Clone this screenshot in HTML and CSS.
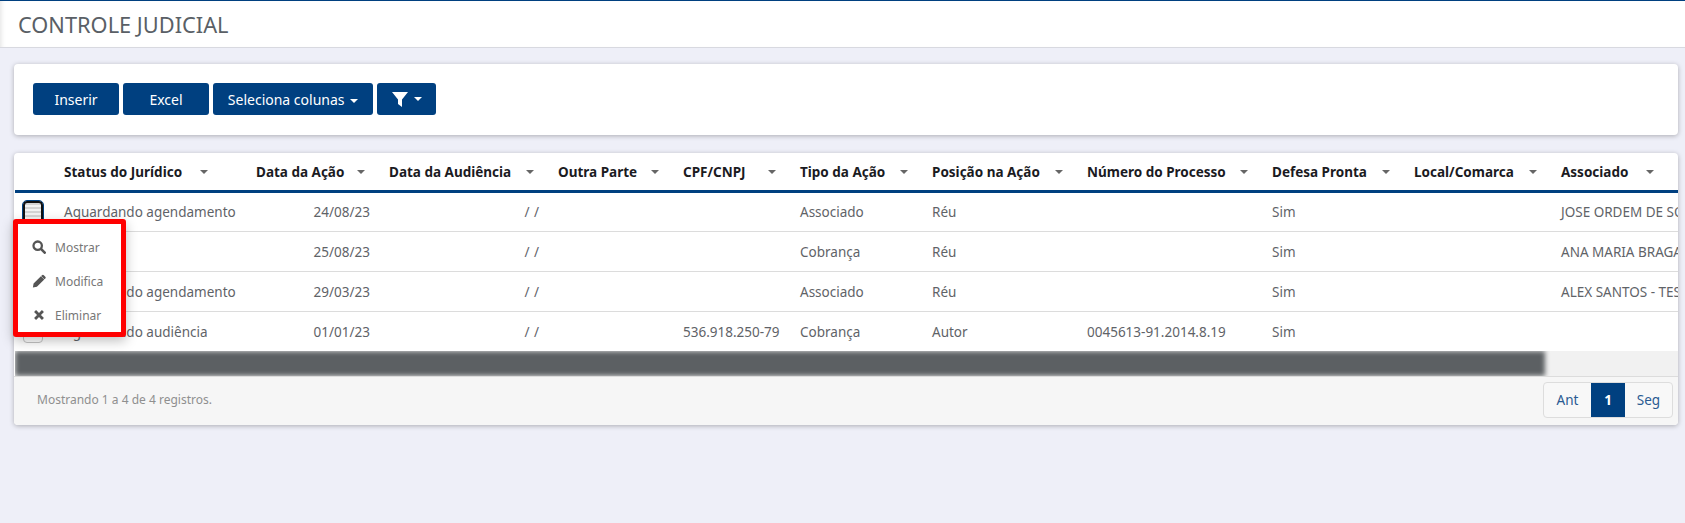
FILE: index.html
```html
<!DOCTYPE html>
<html lang="pt-BR">

<head>
    <meta charset="UTF-8">
    <meta name="viewport" content="width=device-width, initial-scale=1.0">
    <title>Controle Judicial</title>
    <link rel="stylesheet" href="styles.css">
</head>

<body>

    <header class="page-header">
        <h1>CONTROLE JUDICIAL</h1>
    </header>

    <main class="content">

        <section class="card toolbar">
            <button type="button" class="btn btn-wide">Inserir</button>
            <button type="button" class="btn btn-wide">Excel</button>
            <button type="button" class="btn btn-cols">Seleciona colunas <span class="caret"></span></button>
            <button type="button" class="btn btn-icon">
                <svg class="funnel" viewBox="0 0 16 16"><path d="M0 1h16L10 8.500V16L6 13V8.500z" /></svg>
                <span class="caret"></span>
            </button>
        </section>

        <section class="card table-card">
            <div class="table-wrap">
                <table>
                    <colgroup>
                        <col class="c-act">
                        <col class="c-status">
                        <col class="c-data">
                        <col class="c-aud">
                        <col class="c-outra">
                        <col class="c-cpf">
                        <col class="c-tipo">
                        <col class="c-pos">
                        <col class="c-num">
                        <col class="c-def">
                        <col class="c-local">
                        <col class="c-assoc">
                    </colgroup>
                    <thead>
                        <tr>
                            <th></th>
                            <th>Status do Jurídico<span class="sort sort-near"></span></th>
                            <th>Data da Ação<span class="sort"></span></th>
                            <th>Data da Audiência<span class="sort"></span></th>
                            <th>Outra Parte<span class="sort"></span></th>
                            <th>CPF/CNPJ<span class="sort"></span></th>
                            <th>Tipo da Ação<span class="sort"></span></th>
                            <th>Posição na Ação<span class="sort"></span></th>
                            <th>Número do Processo<span class="sort"></span></th>
                            <th>Defesa Pronta<span class="sort"></span></th>
                            <th>Local/Comarca<span class="sort"></span></th>
                            <th>Associado<span class="sort sort-last"></span></th>
                        </tr>
                    </thead>
                    <tbody>
                        <tr>
                            <td><button type="button" class="row-btn row-btn-open"></button></td>
                            <td>Aguardando agendamento</td>
                            <td class="right">24/08/23</td>
                            <td class="right slashes">/ /</td>
                            <td></td>
                            <td></td>
                            <td>Associado</td>
                            <td>Réu</td>
                            <td></td>
                            <td>Sim</td>
                            <td></td>
                            <td>JOSE ORDEM DE SOUZA</td>
                        </tr>
                        <tr>
                            <td><button type="button" class="row-btn"></button></td>
                            <td>Pendente</td>
                            <td class="right">25/08/23</td>
                            <td class="right slashes">/ /</td>
                            <td></td>
                            <td></td>
                            <td>Cobrança</td>
                            <td>Réu</td>
                            <td></td>
                            <td>Sim</td>
                            <td></td>
                            <td>ANA MARIA BRAGANCA</td>
                        </tr>
                        <tr>
                            <td><button type="button" class="row-btn"></button></td>
                            <td>Aguardando agendamento</td>
                            <td class="right">29/03/23</td>
                            <td class="right slashes">/ /</td>
                            <td></td>
                            <td></td>
                            <td>Associado</td>
                            <td>Réu</td>
                            <td></td>
                            <td>Sim</td>
                            <td></td>
                            <td>ALEX SANTOS - TESTE</td>
                        </tr>
                        <tr>
                            <td><button type="button" class="row-btn"></button></td>
                            <td>Aguardando audiência</td>
                            <td class="right">01/01/23</td>
                            <td class="right slashes">/ /</td>
                            <td></td>
                            <td>536.918.250-79</td>
                            <td>Cobrança</td>
                            <td>Autor</td>
                            <td>0045613-91.2014.8.19</td>
                            <td>Sim</td>
                            <td></td>
                            <td></td>
                        </tr>
                    </tbody>
                </table>
            </div>

            <div class="scroll-track">
                <div class="scroll-thumb"></div>
            </div>

            <div class="table-footer">
                <span class="info">Mostrando 1 a 4 de 4 registros.</span>
                <nav class="pager">
                    <a class="page">Ant</a>
                    <a class="page page-on">1</a>
                    <a class="page">Seg</a>
                </nav>
            </div>

            <ul class="row-menu">
                <li>
                    <svg viewBox="0 0 16 16"><circle cx="6.500" cy="6.500" r="4.800" fill="none" stroke="currentColor" stroke-width="2.600" /><path d="M10.500 10.500l4 4" fill="none" stroke="currentColor" stroke-width="3" stroke-linecap="round" /></svg>
                    Mostrar
                </li>
                <li>
                    <svg viewBox="0 0 16 16"><path d="M1 15.500l.8-4.600L10.200 2.500l3.800 3.800-8.400 8.400zM11.400 1.300a1.500 1.500 0 0 1 2.100 0l1.700 1.700a1.500 1.500 0 0 1 0 2.100l-.9.900-3.800-3.800z" /></svg>
                    Modifica
                </li>
                <li>
                    <svg viewBox="0 0 16 16"><path d="M3.500 3.500l9 9M12.500 3.500l-9 9" fill="none" stroke="currentColor" stroke-width="3.200" /></svg>
                    Eliminar
                </li>
            </ul>
        </section>

    </main>

</body>

</html>
```

FILE: styles.css
```css
* {
    box-sizing: border-box;
}

body {
    margin: 0;
    min-height: 523px;
    background: #eeeff8;
    font-family: 'Noto Sans', sans-serif;
    font-size: 13.5px;
    color: #5f6368;
}

.page-header {
    height: 48px;
    padding: 9px 18px 0;
    background: #fff;
    border-top: 1px solid #004080;
    border-bottom: 1px solid #d8d9e0;
    box-shadow: inset 5px 0 5px -4px rgba(0, 0, 0, 0.12);
}

h1 {
    margin: 0;
    font-size: 21.800px;
    font-weight: 400;
    line-height: 30px;
    color: #5a5f66;
}

.content {
    padding: 16px 7px 0 14px;
}

.card {
    background: #fff;
    border-radius: 4px;
    box-shadow: 0 1px 5px rgba(0, 0, 0, 0.28);
}

.toolbar {
    display: flex;
    gap: 4px;
    height: 71px;
    padding: 19px;
    margin-bottom: 18px;
}

.btn {
    height: 32px;
    padding: 0;
    border: none;
    border-radius: 3px;
    background: #004080;
    color: #fff;
    font-family: inherit;
    font-size: 14px;
}

.btn-wide {
    width: 86px;
}

.btn-cols {
    width: 160px;
}

.btn-icon {
    display: flex;
    align-items: center;
    justify-content: center;
    gap: 4px;
    width: 59px;
}

.funnel {
    width: 16px;
    height: 16px;
    fill: #fff;
}

.caret {
    display: inline-block;
    margin-left: 2px;
    vertical-align: middle;
    border-top: 4px solid #fff;
    border-left: 4px solid transparent;
    border-right: 4px solid transparent;
}

.table-card {
    position: relative;
    height: 272px;
}

.table-wrap {
    overflow: hidden;
    padding-left: 1px;
    border-radius: 4px 4px 0 0;
}

table {
    table-layout: fixed;
    width: 1700px;
    border-collapse: separate;
    border-spacing: 0;
}

.c-act { width: 37px; }
.c-status { width: 192px; }
.c-data { width: 133px; }
.c-aud { width: 169px; }
.c-outra { width: 125px; }
.c-cpf { width: 117px; }
.c-tipo { width: 132px; }
.c-pos { width: 155px; }
.c-num { width: 185px; }
.c-def { width: 142px; }
.c-local { width: 147px; }
.c-assoc { width: 166px; }

th {
    position: relative;
    height: 40px;
    padding: 0 12px;
    text-align: left;
    font-weight: 700;
    color: #1b1b1f;
    white-space: nowrap;
    overflow: hidden;
    border-bottom: 3px solid #004080;
}

.sort {
    position: absolute;
    top: 17px;
    right: 12px;
    border-top: 4px solid #666;
    border-left: 4px solid transparent;
    border-right: 4px solid transparent;
}

.sort-near {
    right: 36px;
}

.sort-last {
    right: 61px;
}

td {
    height: 40px;
    padding: 0 12px;
    white-space: nowrap;
    overflow: hidden;
    border-bottom: 1px solid #dcdcdc;
}

tbody tr:first-child td {
    height: 39px;
}

tbody tr:last-child td {
    height: 39px;
    border-bottom: none;
}

td:first-child {
    padding: 0 0 0 8px;
}

td.right {
    padding-right: 7px;
    text-align: right;
}

td.slashes {
    word-spacing: 1px;
}

.row-btn {
    display: block;
    width: 20px;
    height: 22px;
    padding: 0;
    border: 1px solid #c4c4c4;
    border-radius: 4px;
    background: #fff;
}

.row-btn-open {
    border: 2px solid #111;
    outline: 1px solid #004080;
    background: repeating-linear-gradient(#d4d4d4 0 2px, #f2f2f2 2px 4px);
}

.scroll-track {
    height: 25px;
    margin-left: 1px;
    overflow: hidden;
    background: #f1f1f1;
}

.scroll-thumb {
    width: 1530px;
    height: 25px;
    background: #5c6063;
    filter: blur(2.500px);
}

.table-footer {
    display: flex;
    align-items: center;
    justify-content: space-between;
    height: 49px;
    padding: 0 5px 2px 23px;
    background: #f6f6f6;
    border-top: 1px solid #dcdcdc;
    border-radius: 0 0 4px 4px;
}

.info {
    color: #8f8f8f;
    font-size: 12px;
    line-height: 14px;
}

.pager {
    display: flex;
    height: 36px;
    border: 1px solid #ddd;
    border-radius: 4px;
    overflow: hidden;
    background: #f8f8f8;
}

.page {
    display: flex;
    align-items: center;
    justify-content: center;
    width: 47px;
    color: #2a5a92;
}

.page-on {
    width: 34px;
    background: #004080;
    color: #fff;
    font-weight: 700;
}

.row-menu {
    position: absolute;
    top: 66px;
    left: -1px;
    width: 113px;
    height: 118px;
    margin: 0;
    padding: 6px 0 0 14px;
    list-style: none;
    background: #fff;
    border: 5px solid #f00;
    border-radius: 3px;
    box-shadow: 0 4px 12px rgba(0, 0, 0, 0.25);
    font-size: 12px;
    color: #777;
}

.row-menu li {
    display: flex;
    align-items: center;
    gap: 9px;
    height: 34px;
}

.row-menu svg {
    width: 14px;
    height: 14px;
    color: #555;
    fill: #555;
}
```
